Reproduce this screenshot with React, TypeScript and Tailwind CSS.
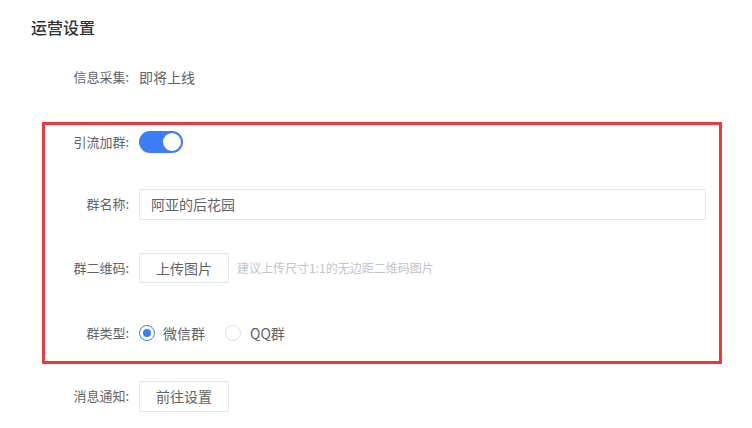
import { useState } from 'react';

const font = { fontFamily: '"Noto Sans CJK SC", "Noto Sans", sans-serif' };

function Label({ text }: { text: string }) {
  return (
    <span className="w-[84px] shrink-0 text-right text-[13px] leading-8 text-[#606266]">
      {text}
    </span>
  );
}

export default function App() {
  const [on, setOn] = useState(true);
  const [groupType, setGroupType] = useState<'wx' | 'qq'>('wx');

  return (
    <div className="min-h-screen w-[752px] bg-white pt-[17px]" style={font}>
      <h2 className="pl-[31px] text-[16px] leading-5 font-medium text-[#303133]">运营设置</h2>

      {/* 信息采集 */}
      <div className="mt-[24px] flex h-8 items-center gap-[10px] pl-[45px]">
        <Label text="信息采集:" />
        <span className="text-[14px] text-[#606266]">即将上线</span>
      </div>

      {/* highlighted group settings */}
      <div className="mt-[29px] ml-[42px] w-[680px] border-[3px] border-[#e53c3f] pt-[1px] pb-[12px]">
        <div className="flex h-8 items-center gap-[10px]">
          <Label text="引流加群:" />
          <button
            onClick={() => setOn(!on)}
            className={`flex h-[22px] w-[44px] items-center rounded-full px-[2px] ${
              on ? 'justify-end bg-[#3d7ef6]' : 'justify-start bg-[#dcdfe6]'
            }`}
          >
            <span className="h-[18px] w-[18px] rounded-full bg-white" />
          </button>
        </div>

        <div className="mt-[30px] flex h-8 items-center gap-[10px]">
          <Label text="群名称:" />
          <input
            defaultValue="阿亚的后花园"
            className="h-[31px] w-[567px] border border-[#e4e7ed] px-[11px] text-[14px] text-[#606266] outline-none"
          />
        </div>

        <div className="mt-[32px] flex h-8 items-center gap-[10px]">
          <Label text="群二维码:" />
          <button className="h-[30px] w-[90px] border border-[#e4e7ed] bg-white text-[14px] text-[#606266]">
            上传图片
          </button>
          <span className="-ml-[2px] text-[12px] text-[#c0c4cc]">建议上传尺寸1:1的无边距二维码图片</span>
        </div>

        <div className="mt-[33px] flex h-8 items-center gap-[10px]">
          <Label text="群类型:" />
          <div className="flex items-center">
            <label className="flex cursor-pointer items-center gap-[8px]" onClick={() => setGroupType('wx')}>
              <span
                className={`flex h-[16px] w-[16px] items-center justify-center rounded-full border ${
                  groupType === 'wx' ? 'border-[#3d7ef6]' : 'border-[#dcdfe6]'
                }`}
              >
                {groupType === 'wx' && <span className="h-[8px] w-[8px] rounded-full bg-[#3d7ef6]" />}
              </span>
              <span className="text-[14px] text-[#606266]">微信群</span>
            </label>
            <label className="ml-[20px] flex cursor-pointer items-center gap-[9px]" onClick={() => setGroupType('qq')}>
              <span
                className={`flex h-[16px] w-[16px] items-center justify-center rounded-full border ${
                  groupType === 'qq' ? 'border-[#3d7ef6]' : 'border-[#dcdfe6]'
                }`}
              >
                {groupType === 'qq' && <span className="h-[8px] w-[8px] rounded-full bg-[#3d7ef6]" />}
              </span>
              <span className="text-[14px] text-[#606266]">QQ群</span>
            </label>
          </div>
        </div>
      </div>

      {/* 消息通知 */}
      <div className="mt-[16px] flex h-8 items-center gap-[10px] pl-[45px]">
        <Label text="消息通知:" />
        <button className="h-[31px] w-[90px] border border-[#e4e7ed] bg-white text-[14px] text-[#606266]">
          前往设置
        </button>
      </div>
    </div>
  );
}
